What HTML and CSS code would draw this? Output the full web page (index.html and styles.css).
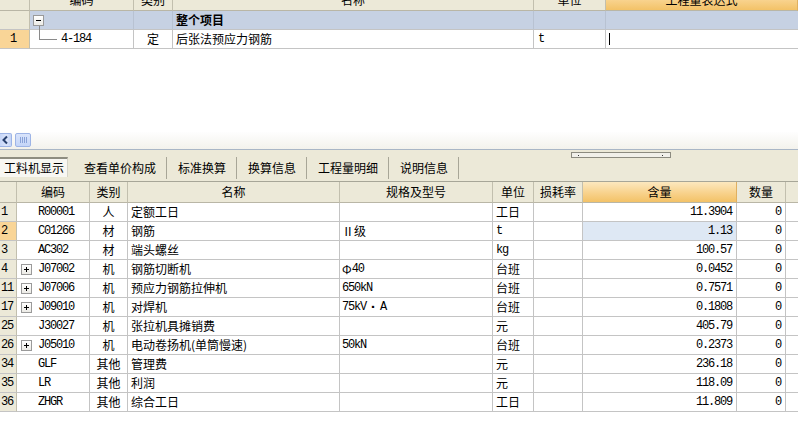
FILE: index.html
```html
<!DOCTYPE html>
<html>
<head>
<meta charset="utf-8">
<title>工料机显示</title>
<link rel="stylesheet" href="styles.css">
</head>
<body>
<div class="top-pane">
  <div class="grid top-grid">
    <div class="row head">
      <div class="c rn"></div>
      <div class="c">编码</div>
      <div class="c">类别</div>
      <div class="c">名称</div>
      <div class="c">单位</div>
      <div class="c hot">工程量表达式</div>
    </div>
    <div class="row group">
      <div class="c rn"></div>
      <div class="c gcode"><span class="toggle minus"></span></div>
      <div class="c"></div>
      <div class="c name bold">整个项目</div>
      <div class="c"></div>
      <div class="c last"></div>
    </div>
    <div class="row">
      <div class="c rn on mono top-rn">1</div>
      <div class="c tcode"><span class="tree-line"></span><span class="mono">4-184</span></div>
      <div class="c ctr">定</div>
      <div class="c name">后张法预应力钢筋</div>
      <div class="c unit mono">t</div>
      <div class="c last"><span class="caret"></span></div>
    </div>
  </div>
</div>

<div class="hscroll">
  <div class="sb-btn">
    <svg width="12" height="14" viewBox="0 0 12 14"><path d="M7 3.5 L3.5 7 L7 10.5" stroke="#27406e" stroke-width="2" fill="none"/></svg>
  </div>
  <div class="sb-thumb"><span></span><span></span><span></span><span></span></div>
</div>

<div class="tabbar">
  <div class="tab active">工料机显示</div>
  <div class="tab first">查看单价构成</div>
  <div class="tab">标准换算</div>
  <div class="tab">换算信息</div>
  <div class="tab">工程量明细</div>
  <div class="tab">说明信息</div>
  <div class="grip"><i></i><i></i></div>
</div>

<div class="grid bottom-grid">
  <div class="row head">
    <div class="c rn"></div>
    <div class="c">编码</div>
    <div class="c">类别</div>
    <div class="c">名称</div>
    <div class="c">规格及型号</div>
    <div class="c">单位</div>
    <div class="c">损耗率</div>
    <div class="c hot">含量</div>
    <div class="c">数量</div>
    <div class="c last"></div>
  </div>

  <div class="row">
    <div class="c rn mono">1</div>
    <div class="c code"><span class="toggle none"></span><span class="mono">R00001</span></div>
    <div class="c ctr">人</div>
    <div class="c name">定额工日</div>
    <div class="c spec"></div>
    <div class="c unit">工日</div>
    <div class="c"></div>
    <div class="c num mono">11.3904</div>
    <div class="c num mono">0</div>
    <div class="c last"></div>
  </div>
  <div class="row">
    <div class="c rn on mono">2</div>
    <div class="c code"><span class="toggle none"></span><span class="mono">C01266</span></div>
    <div class="c ctr">材</div>
    <div class="c name">钢筋</div>
    <div class="c spec">Ⅱ级</div>
    <div class="c unit mono">t</div>
    <div class="c"></div>
    <div class="c num mono focus">1.13</div>
    <div class="c num mono">0</div>
    <div class="c last"></div>
  </div>
  <div class="row">
    <div class="c rn mono">3</div>
    <div class="c code"><span class="toggle none"></span><span class="mono">AC302</span></div>
    <div class="c ctr">材</div>
    <div class="c name">端头螺丝</div>
    <div class="c spec"></div>
    <div class="c unit mono">kg</div>
    <div class="c"></div>
    <div class="c num mono">100.57</div>
    <div class="c num mono">0</div>
    <div class="c last"></div>
  </div>
  <div class="row">
    <div class="c rn mono">4</div>
    <div class="c code"><span class="toggle plus"></span><span class="mono">J07002</span></div>
    <div class="c ctr">机</div>
    <div class="c name">钢筋切断机</div>
    <div class="c spec">Φ<span class="mono">40</span></div>
    <div class="c unit">台班</div>
    <div class="c"></div>
    <div class="c num mono">0.0452</div>
    <div class="c num mono">0</div>
    <div class="c last"></div>
  </div>
  <div class="row">
    <div class="c rn mono">11</div>
    <div class="c code"><span class="toggle plus"></span><span class="mono">J07006</span></div>
    <div class="c ctr">机</div>
    <div class="c name">预应力钢筋拉伸机</div>
    <div class="c spec mono">650kN</div>
    <div class="c unit">台班</div>
    <div class="c"></div>
    <div class="c num mono">0.7571</div>
    <div class="c num mono">0</div>
    <div class="c last"></div>
  </div>
  <div class="row">
    <div class="c rn mono">17</div>
    <div class="c code"><span class="toggle plus"></span><span class="mono">J09010</span></div>
    <div class="c ctr">机</div>
    <div class="c name">对焊机</div>
    <div class="c spec"><span class="mono">75kV</span><span class="dot">▪</span><span class="mono">A</span></div>
    <div class="c unit">台班</div>
    <div class="c"></div>
    <div class="c num mono">0.1808</div>
    <div class="c num mono">0</div>
    <div class="c last"></div>
  </div>
  <div class="row">
    <div class="c rn mono">25</div>
    <div class="c code"><span class="toggle none"></span><span class="mono">J30027</span></div>
    <div class="c ctr">机</div>
    <div class="c name">张拉机具摊销费</div>
    <div class="c spec"></div>
    <div class="c unit">元</div>
    <div class="c"></div>
    <div class="c num mono">405.79</div>
    <div class="c num mono">0</div>
    <div class="c last"></div>
  </div>
  <div class="row">
    <div class="c rn mono">26</div>
    <div class="c code"><span class="toggle plus"></span><span class="mono">J05010</span></div>
    <div class="c ctr">机</div>
    <div class="c name">电动卷扬机(单筒慢速)</div>
    <div class="c spec mono">50kN</div>
    <div class="c unit">台班</div>
    <div class="c"></div>
    <div class="c num mono">0.2373</div>
    <div class="c num mono">0</div>
    <div class="c last"></div>
  </div>
  <div class="row">
    <div class="c rn mono">34</div>
    <div class="c code"><span class="toggle none"></span><span class="mono">GLF</span></div>
    <div class="c ctr">其他</div>
    <div class="c name">管理费</div>
    <div class="c spec"></div>
    <div class="c unit">元</div>
    <div class="c"></div>
    <div class="c num mono">236.18</div>
    <div class="c num mono">0</div>
    <div class="c last"></div>
  </div>
  <div class="row">
    <div class="c rn mono">35</div>
    <div class="c code"><span class="toggle none"></span><span class="mono">LR</span></div>
    <div class="c ctr">其他</div>
    <div class="c name">利润</div>
    <div class="c spec"></div>
    <div class="c unit">元</div>
    <div class="c"></div>
    <div class="c num mono">118.09</div>
    <div class="c num mono">0</div>
    <div class="c last"></div>
  </div>
  <div class="row">
    <div class="c rn mono">36</div>
    <div class="c code"><span class="toggle none"></span><span class="mono">ZHGR</span></div>
    <div class="c ctr">其他</div>
    <div class="c name">综合工日</div>
    <div class="c spec"></div>
    <div class="c unit">工日</div>
    <div class="c"></div>
    <div class="c num mono">11.809</div>
    <div class="c num mono">0</div>
    <div class="c last"></div>
  </div>
</div>
</body>
</html>
```

FILE: styles.css
```css
* {
  box-sizing: border-box;
  margin: 0;
  padding: 0;
}

body {
  margin: 0;
  width: 798px;
  height: 436px;
  overflow: hidden;
  background: #ffffff;
  font-family: "Noto Sans CJK SC", "Liberation Sans", sans-serif;
  font-size: 12px;
  color: #000000;
}

.mono {
  font-family: "Liberation Mono", "Noto Sans CJK SC", monospace;
  font-size: 12px;
  letter-spacing: -1.2px;
}

/* ---------- grids ---------- */
.grid .row {
  display: grid;
  height: 19px;
}

.c {
  display: flex;
  align-items: center;
  white-space: nowrap;
  overflow: hidden;
  line-height: 1;
  border-right: 1px solid #c4c4c4;
  border-bottom: 1px solid #c4c4c4;
}

.c.last {
  border-right: none;
}

.head .c {
  background: #ece9d8;
  justify-content: center;
  border-right-color: #c2bfae;
  border-bottom-color: #b9b6a6;
}

.head .c.hot {
  background: linear-gradient(#fce8bf, #f8d28c 55%, #f3c267);
  border-right-color: #e0b060;
}

.rn {
  background: #ece9d8;
  border-right-color: #c2bfae;
  padding-left: 1px;
}

.rn.on {
  background: #f9d597;
}

.ctr {
  justify-content: center;
}

.name {
  padding-left: 3px;
}

.bold {
  font-weight: 700;
}

.unit {
  padding-left: 3px;
}

.spec {
  padding-left: 2px;
}

.num {
  justify-content: flex-end;
  padding-right: 4px;
}

.focus {
  background: #dee8f4;
}

/* ---------- top grid ---------- */
.top-pane {
  height: 132px;
  overflow: hidden;
}

.top-grid {
  margin-top: -11px;
}

.top-grid .row {
  grid-template-columns: 30px 104px 39px 361px 72px 192px;
}

.top-grid .row.head {
  height: 22px;
}

.top-grid .group .c {
  background: #c6d1e3;
  border-right-color: #b8c2d2;
}

.top-grid .group .c.rn {
  background: #ece9d8;
  border-right-color: #c2bfae;
}

.top-grid .group .gcode {
  overflow: visible;
}

.top-rn {
  padding-left: 10px;
}

.top-grid .unit {
  padding-left: 4px;
}

.gcode {
  padding-left: 3px;
}

.tcode {
  align-items: flex-start;
}

.tcode .mono {
  align-self: center;
  margin-left: 4px;
}

.tree-line {
  display: inline-block;
  width: 18px;
  height: 10px;
  margin-left: 9px;
  border-left: 1px solid #8a8a8a;
  border-bottom: 1px solid #8a8a8a;
}

.caret {
  display: inline-block;
  width: 1px;
  height: 12px;
  margin-left: 3px;
  background: #000;
}

/* toggles */
.toggle {
  position: relative;
  display: inline-block;
  width: 11px;
  height: 11px;
  flex: none;
}

.toggle.minus,
.toggle.plus {
  border: 1px solid #9a9a9a;
  background: linear-gradient(#ffffff, #ecebe6);
}

.toggle.minus::before,
.toggle.plus::before {
  content: "";
  position: absolute;
  left: 2px;
  top: 4px;
  width: 5px;
  height: 1px;
  background: #000;
}

.toggle.minus::after {
  content: "";
  position: absolute;
  left: 5px;
  top: 10px;
  width: 1px;
  height: 5px;
  background: #8a8a8a;
}

.toggle.plus::after {
  content: "";
  position: absolute;
  left: 4px;
  top: 2px;
  width: 1px;
  height: 5px;
  background: #000;
}

/* ---------- scrollbar ---------- */
.hscroll {
  height: 18px;
  display: flex;
  align-items: flex-start;
  padding-top: 1px;
  background: linear-gradient(#fefefe, #f3f2ec);
  border-bottom: 1px solid #a9b6c6;
}

.sb-btn {
  width: 12px;
  height: 14px;
  border: 1px solid #9db4e6;
  border-left: none;
  border-radius: 0 2px 2px 0;
  background: linear-gradient(90deg, #c6d6f8, #dbe5fb 60%, #c2d3f6);
}

.sb-btn svg {
  display: block;
  margin-top: -1px;
}

.sb-thumb {
  width: 16px;
  height: 14px;
  margin-left: 3px;
  border: 1px solid #9db4e6;
  border-radius: 2px;
  background: linear-gradient(#d9e4fb, #c4d5f8);
  display: flex;
  justify-content: center;
  align-items: center;
  gap: 1px;
}

.sb-thumb span {
  width: 1px;
  height: 6px;
  background: #8aa3d8;
}

/* ---------- tabs ---------- */
.tabbar {
  position: relative;
  height: 31px;
  background: #ece9d8;
  display: flex;
  align-items: flex-start;
  padding-top: 7px;
}

.tab {
  height: 22px;
  display: flex;
  align-items: center;
  padding: 0 10px 0 11px;
  border-right: 1px solid #a8a697;
  line-height: 1;
  white-space: nowrap;
}

.tab.first {
  padding-left: 11px;
}

.tab.active {
  width: 68px;
  margin-right: 5px;
  padding: 0 0 0 4px;
  background: #f8f7f2;
  border-top: 2px solid #8e8d80;
  border-right: 1px solid #d6d4c8;
  height: 20px;
  margin-top: 0;
}

.grip {
  position: absolute;
  left: 571px;
  top: 2px;
  width: 100px;
  height: 6px;
  border: 1px solid #8c8b80;
  background: #f1f0ea;
}

.grip i {
  position: absolute;
  top: 2px;
  width: 1px;
  height: 1px;
  background: #333;
}

.grip i:first-child {
  left: 6px;
}

.grip i:last-child {
  right: 7px;
}

/* ---------- bottom grid ---------- */
.bottom-grid .row {
  grid-template-columns: 17px 73px 38px 212px 153px 41px 49px 154px 49px 12px;
}

.bottom-grid .row.head {
  height: 22px;
  border-top: 1px solid #a7a698;
}

.code {
  padding-left: 4px;
}

.code .mono {
  margin-left: 6px;
}

.dot {
  font-size: 8px;
  margin: 0 3px;
}
```
